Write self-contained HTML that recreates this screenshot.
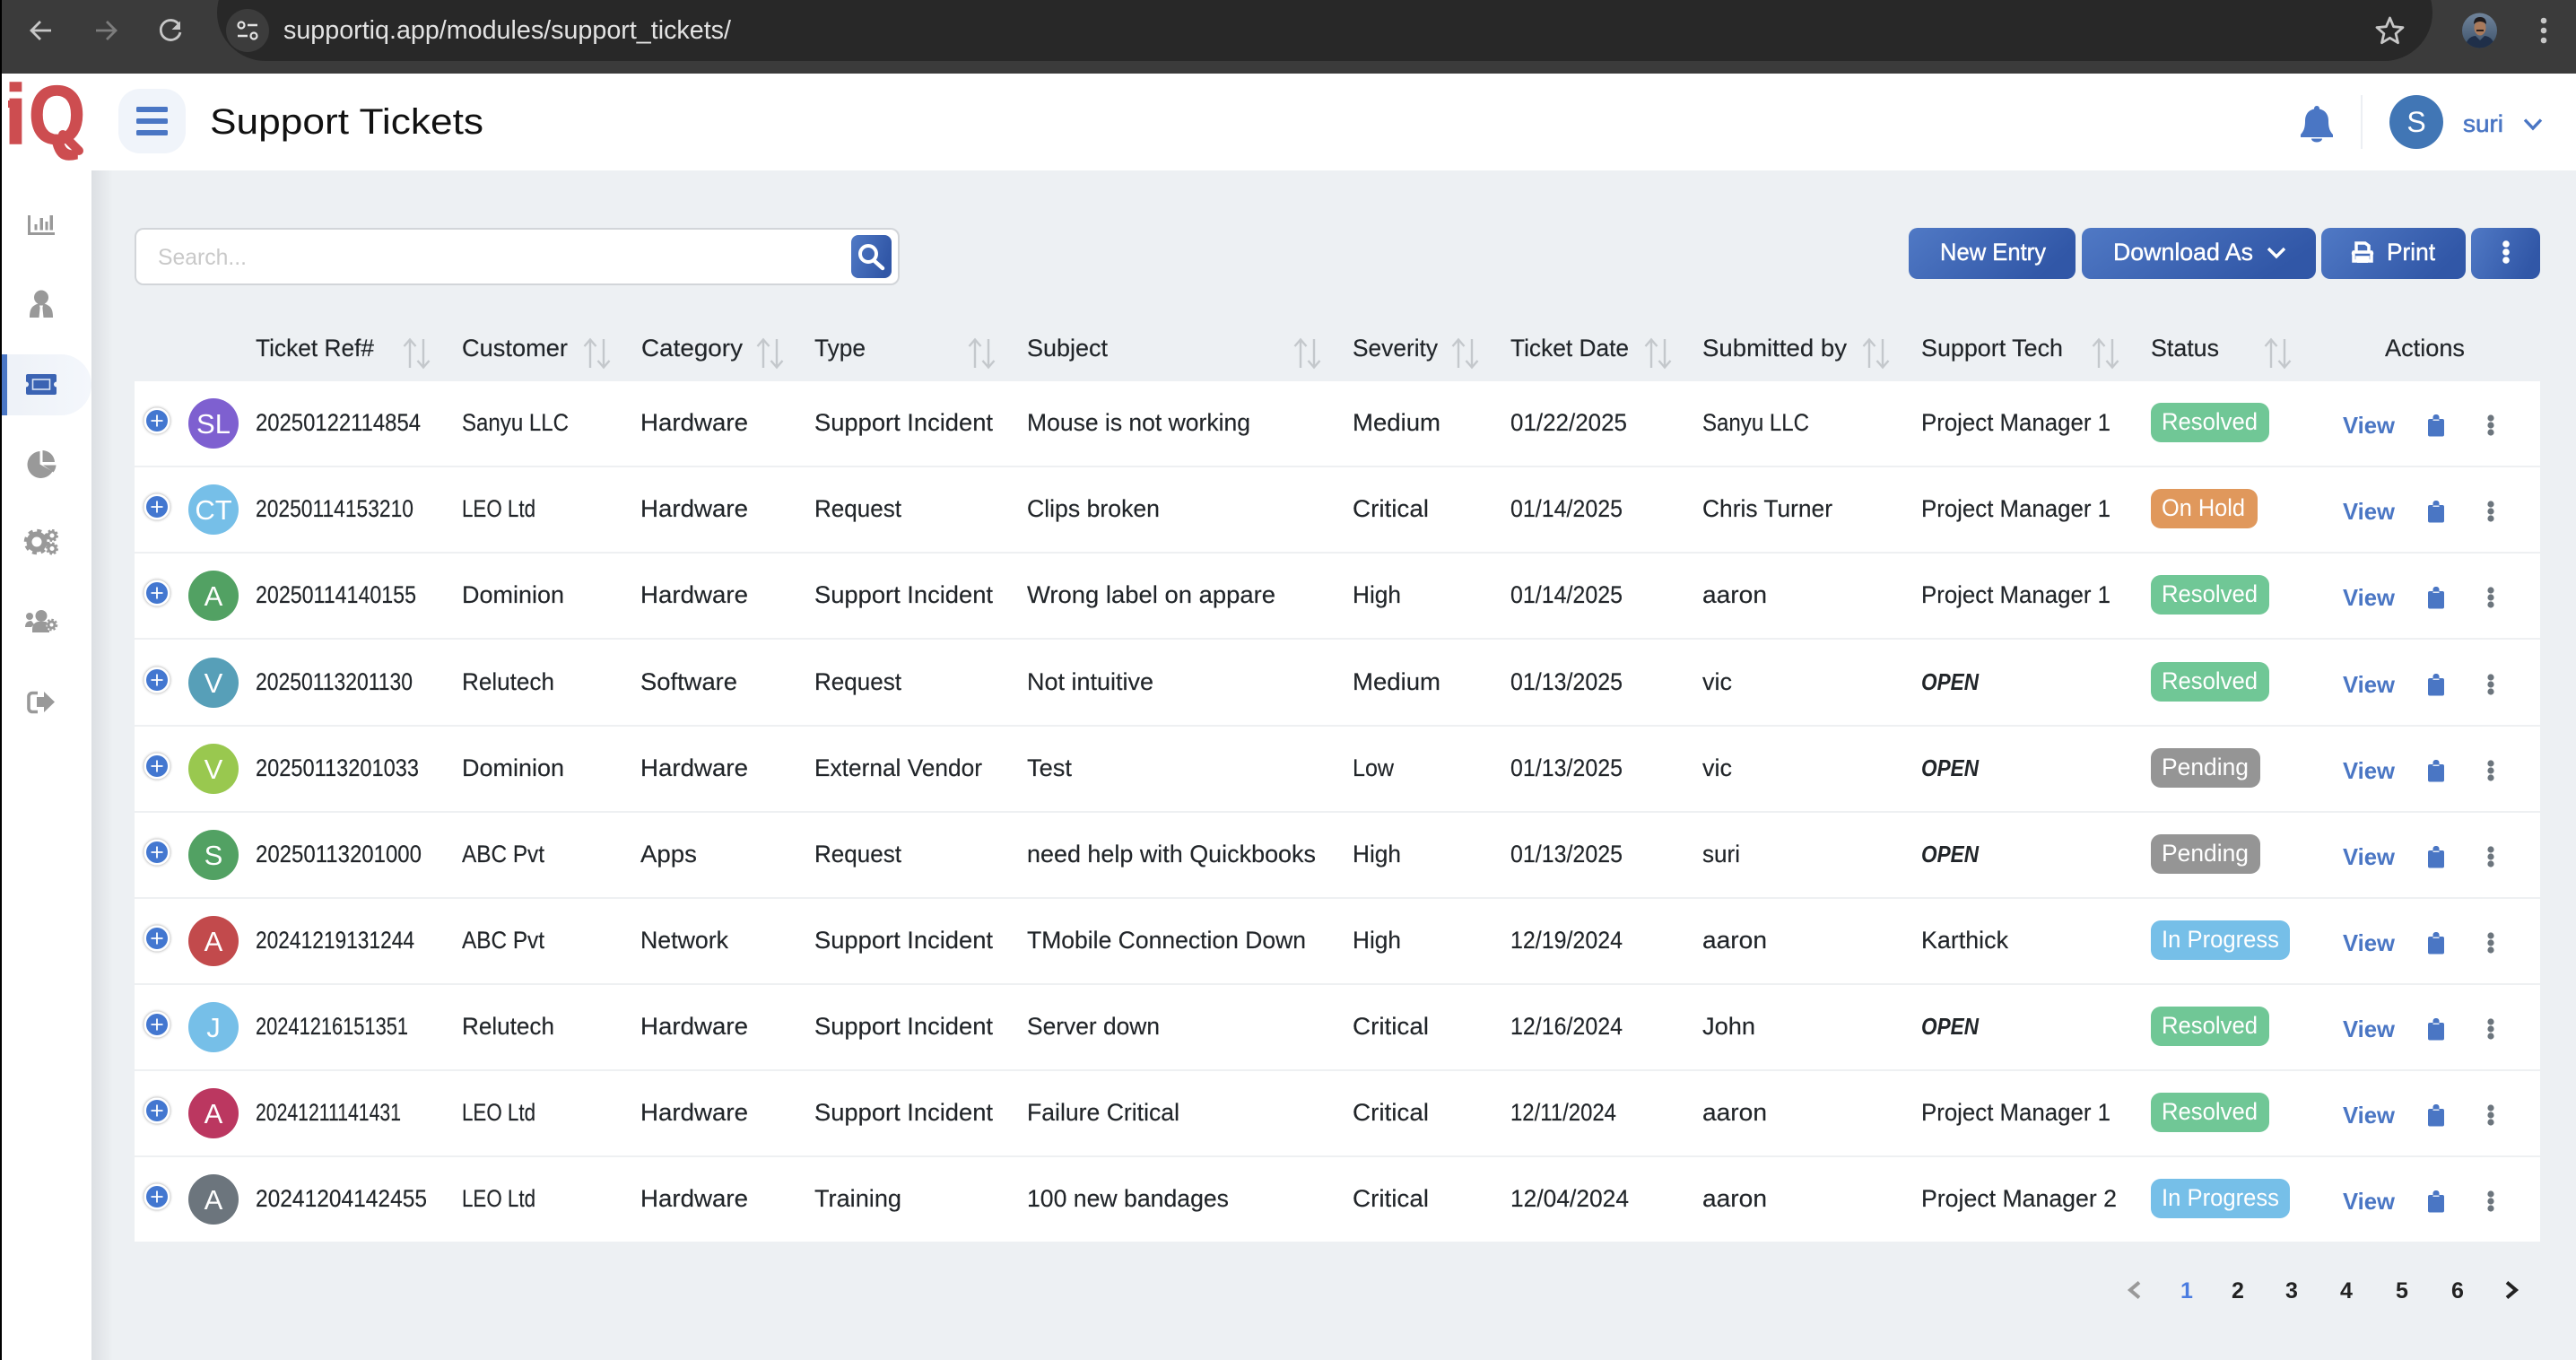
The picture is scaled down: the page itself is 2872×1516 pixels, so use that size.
<!DOCTYPE html>
<html lang="en"><head><meta charset="utf-8"><title>Support Tickets</title>
<style>
html,body{margin:0;padding:0;background:#edf0f3;width:2872px;height:1516px;overflow:hidden}
svg{display:block}
text{font-family:"Liberation Sans",sans-serif;font-size:26.5px;fill:#212529;stroke:#212529;stroke-width:.15}
.w{fill:#fff;stroke:none}
.b{fill:url(#btn)}
.o{font-weight:bold;font-style:italic;stroke:none;font-size:26px}
.v{font-weight:bold;fill:#4a76c4;font-size:26px;stroke:none}
.bd{font-size:26.5px;fill:#fff;stroke:none}
.av{font-size:31px;fill:#fff;text-anchor:middle;stroke:none}
.pg{font-size:25px;font-weight:bold;text-anchor:middle;fill:#222;stroke:none}
.ic{fill:#999}
</style></head><body>
<svg xmlns="http://www.w3.org/2000/svg" width="2872" height="1516" viewBox="0 0 2872 1516">
<defs>
<linearGradient id="btn" x1="0" y1="0" x2="1" y2="0.35"><stop offset="0" stop-color="#5079c5"/><stop offset="1" stop-color="#3157a7"/></linearGradient>
<linearGradient id="side" x1="0" x2="1" y1="0" y2="0"><stop offset="0" stop-color="#dcdfe3"/><stop offset="1" stop-color="#edf0f3"/></linearGradient>
<linearGradient id="act" x1="0" x2="1" y1="0" y2="0"><stop offset="0" stop-color="#edf1f7"/><stop offset="1" stop-color="#f4f7fc"/></linearGradient>
<linearGradient id="photo" x1="0" x2="0" y1="0" y2="1"><stop offset="0" stop-color="#71859c"/><stop offset="1" stop-color="#3b5068"/></linearGradient>
<filter id="sh" x="-30%" y="-30%" width="160%" height="160%"><feDropShadow dx="0" dy="0" stdDeviation="1.6" flood-color="#000" flood-opacity=".45"/></filter>
<g id="plus"><circle cx="175" cy="44" r="14.5" fill="#fff" filter="url(#sh)"/><circle cx="175" cy="44" r="12" fill="#4377d0"/><path d="M168.5 44h13M175 37.5v13" stroke="#fff" stroke-width="1.8"/></g>
<g id="clip"><path d="M2707 469a2 2 0 0 1 2-2h3.500v-1.500a3.500 3.500 0 0 1 2.500-3.500h2a3.500 3.500 0 0 1 2.500 3.500v1.500h3.500a2 2 0 0 1 2 2v15.500a2 2 0 0 1-2 2h-14a2 2 0 0 1-2-2z" transform="translate(0,-425)" fill="#4a76c4"/><path d="M2712.500 43.200h7" stroke="#fff" stroke-width="1.300"/></g>
<g id="dots"><circle cx="2777" cy="41" r="3.600" fill="#6c757d"/><circle cx="2777" cy="49" r="3.600" fill="#6c757d"/><circle cx="2777" cy="57" r="3.600" fill="#6c757d"/></g>
<g id="sort" fill="none" stroke="#c4c8cc" stroke-width="2.400"><path d="M0 1v32M-6.500 9 0 1.500 6.500 9"/><path d="M15 1v32M8.500 25 15 32.500 21.500 25"/></g>
</defs>

<!-- page -->
<rect width="2872" height="1516" fill="#edf0f3"/>
<rect x="102" y="190" width="24" height="1326" fill="url(#side)"/>
<rect x="0" y="82" width="2872" height="108" fill="#fff"/>
<rect x="2" y="190" width="100" height="1326" fill="#fff"/>

<!-- browser bar -->
<rect width="2872" height="82" fill="#3b3b3b"/>
<rect x="242" y="-40" width="2470" height="108" rx="54" fill="#282828"/>
<path d="M57 34H36M45 24 35 34 45 44" fill="none" stroke="#c7c7c7" stroke-width="2.800"/>
<path d="M107 34H128M119 24 129 34 119 44" fill="none" stroke="#7c7c7c" stroke-width="2.800"/>
<path d="M199.500 27.500A11 11 0 1 0 201 36" fill="none" stroke="#c7c7c7" stroke-width="2.800"/><path d="M201 23.500v9.500h-9.500z" fill="#c7c7c7"/>
<circle cx="276" cy="34" r="24" fill="#3c3c3c"/>
<circle cx="269" cy="28" r="3.500" fill="none" stroke="#e3e3e3" stroke-width="2.200"/><path d="M276 28h11M265 40h11" stroke="#e3e3e3" stroke-width="2.400"/><circle cx="283" cy="40" r="3.500" fill="none" stroke="#e3e3e3" stroke-width="2.200"/>
<text x="316" y="43" textLength="499" lengthAdjust="spacingAndGlyphs" style="font-size:29px;fill:#e3e3e3;stroke:none">supportiq.app/modules/support_tickets/</text>
<path d="M2664.500 20l4.100 9.700 10.400 .9-7.900 6.900 2.400 10.200-9-5.400-9 5.400 2.400-10.200-7.900-6.900 10.400-.9z" fill="none" stroke="#c7c7c7" stroke-width="2.800" stroke-linejoin="round"/>
<clipPath id="pc"><circle cx="2764.500" cy="34" r="19.500"/></clipPath>
<g clip-path="url(#pc)"><rect x="2744" y="14" width="41" height="41" fill="url(#photo)"/><ellipse cx="2765" cy="31" rx="6.500" ry="8.500" fill="#a97a5c"/><path d="M2758 27q0-8 7-8t7 8q-3-3-7-3t-7 3z" fill="#1d1a1c"/><path d="M2761 33h8v2h-8z" fill="#2a1f1c"/><path d="M2748 56q1-15 12-16l5 5 5-5q11 1 12 16z" fill="#1f2f49"/></g>
<circle cx="2836" cy="23" r="3.300" fill="#c7c7c7"/><circle cx="2836" cy="34" r="3.300" fill="#c7c7c7"/><circle cx="2836" cy="45" r="3.300" fill="#c7c7c7"/>
<rect x="0" y="0" width="2" height="1516" fill="#000"/>

<!-- header -->
<text x="5" y="160" textLength="25" lengthAdjust="spacingAndGlyphs" style="font-size:94px;font-weight:bold;fill:#cd4d50;stroke:#cd4d50;stroke-width:1.500">i</text>
<rect x="9" y="112" width="12" height="8" fill="#cd4d50"/>
<text x="32" y="160" textLength="63" lengthAdjust="spacingAndGlyphs" style="font-size:92px;font-weight:bold;fill:#cd4d50;stroke:#cd4d50;stroke-width:1.500">Q</text>
<path d="M70 150 88 168" stroke="#cd4d50" stroke-width="10" stroke-linecap="round"/>
<rect x="132" y="99" width="75" height="72" rx="24" fill="#f0f4fa"/>
<rect x="152" y="119" width="35" height="6" rx="1.500" fill="#4a76c4"/><rect x="152" y="132" width="35" height="6" rx="1.500" fill="#4a76c4"/><rect x="152" y="145" width="35" height="6" rx="1.500" fill="#4a76c4"/>
<text x="234" y="149" textLength="305" lengthAdjust="spacingAndGlyphs" style="font-size:40px;fill:#111;stroke:none">Support Tickets</text>
<path d="M2583 118c2 0 3 1.500 3 3.500 7 1.500 10 7 10 13 0 9 2 12 5 15.500v3h-36v-3c3-3.500 5-6.500 5-15.500 0-6 3-11.500 10-13 0-2 1-3.500 3-3.500z" fill="#4a76c4"/><path d="M2577 154.500h12a6 4 0 0 1-12 0z" fill="#4a76c4"/>
<rect x="2632" y="106" width="2" height="60" fill="#eceff3"/>
<circle cx="2694" cy="136" r="30" fill="#4176b5"/>
<text x="2694" y="147" text-anchor="middle" style="font-size:32px;fill:#fff;stroke:none">S</text>
<text x="2746" y="147" textLength="45" lengthAdjust="spacingAndGlyphs" style="font-size:27px;fill:#4a76c4;stroke:#4a76c4;stroke-width:.6">suri</text>
<path d="M2815 133.500 2824 143 2833 133.500" fill="none" stroke="#4a76c4" stroke-width="3.400"/>

<!-- sidebar -->
<path d="M2 395H68a34 34 0 0 1 34 34a34 34 0 0 1-34 34H2z" fill="url(#act)"/>
<rect x="2" y="395" width="6" height="68" fill="#4a76c4"/>
<path d="M32.500 240v20.500H61" fill="none" stroke="#999" stroke-width="3"/><rect x="38.500" y="250" width="3" height="6.500" class="ic"/><rect x="44.500" y="243" width="3.500" height="13.500" class="ic"/><rect x="50.500" y="247" width="3" height="9.500" class="ic"/><rect x="55.500" y="240" width="3.500" height="16.500" class="ic"/>
<circle cx="46" cy="331.500" r="8" class="ic"/><path d="M33 354c0-9 2-13 9.500-15.500h7C57 341 59 345 59 354z" class="ic"/><path d="M44 340.500h4l-.6 2.500 1.100 11h-5l1.100-11z" fill="#fff"/>
<path d="M44.500 503a15 15 0 1 0 14 22.500l-14-8z" class="ic"/><path d="M47.500 502a14 14 0 0 1 13.500 13h-13.500z" class="ic"/><path d="M48 518.500h14.500a14 14 0 0 1-3 8z" class="ic"/>
<circle cx="41" cy="604" r="8.500" fill="none" stroke="#999" stroke-width="6"/><circle cx="41" cy="604" r="12.500" fill="none" stroke="#999" stroke-width="3.500" stroke-dasharray="5 4.800"/>
<circle cx="58" cy="597" r="4" fill="none" stroke="#999" stroke-width="3"/><circle cx="58" cy="597" r="6" fill="none" stroke="#999" stroke-width="2" stroke-dasharray="2.500 2.200"/>
<circle cx="58" cy="611.500" r="4" fill="none" stroke="#999" stroke-width="3"/><circle cx="58" cy="611.500" r="6" fill="none" stroke="#999" stroke-width="2" stroke-dasharray="2.500 2.200"/>
<circle cx="33" cy="687" r="4" class="ic"/><path d="M28 699c0-5 3-7 7-7l3 4-3 3z" class="ic"/><circle cx="46" cy="686.500" r="6.500" class="ic"/><path d="M36 705v-4c0-5 4-8 7-8h6c3 0 5 1 6 2v10z" class="ic"/>
<circle cx="58" cy="697" r="6.500" fill="#fff"/><circle cx="57.500" cy="696.500" r="3.500" fill="none" stroke="#999" stroke-width="3"/><circle cx="57.500" cy="696.500" r="5.800" fill="none" stroke="#999" stroke-width="2" stroke-dasharray="2.500 2"/>
<path d="M42 772.500h-6a4 4 0 0 0-4 4v13a4 4 0 0 0 4 4h6" fill="none" stroke="#999" stroke-width="3.600"/><path d="M41 777h8v-6l12 11.500-12 11.500v-6h-8z" class="ic"/>
<path d="M31 417h30a2 2 0 0 1 2 2v6.500a3 3 0 0 0 0 6V438a2 2 0 0 1-2 2H31a2 2 0 0 1-2-2v-6.500a3 3 0 0 0 0-6V419a2 2 0 0 1 2-2z" fill="#3b63b3"/>
<rect x="36.500" y="423" width="19" height="11" fill="#3b63b3" stroke="#dbe4f4" stroke-width="1.600"/>

<!-- search -->
<rect x="151" y="255" width="851" height="62" rx="9" fill="#fff" stroke="#d2d5d9" stroke-width="2"/>
<text x="176" y="295" textLength="99" lengthAdjust="spacingAndGlyphs" style="font-size:25px;fill:#c9c9c9;stroke:none">Search...</text>
<rect x="949" y="262" width="45" height="48" rx="8" fill="url(#btn)"/>
<circle cx="968" cy="283" r="9" fill="none" stroke="#fff" stroke-width="4"/><path d="M975 291 984 299" stroke="#fff" stroke-width="4.500" stroke-linecap="round"/>

<!-- buttons -->
<rect x="2128" y="254" width="186" height="57" rx="10" class="b"/>
<text x="2163" y="290" textLength="118" lengthAdjust="spacingAndGlyphs" style="font-size:26.5px;fill:#fff;stroke:#fff;stroke-width:.4">New Entry</text>
<rect x="2321" y="254" width="261" height="57" rx="10" class="b"/>
<text x="2356" y="290" textLength="156" lengthAdjust="spacingAndGlyphs" style="font-size:26.5px;fill:#fff;stroke:#fff;stroke-width:.4">Download As</text>
<path d="M2529 277 2538 286 2547 277" fill="none" stroke="#fff" stroke-width="3.400"/>
<rect x="2588" y="254" width="161" height="57" rx="10" class="b"/>
<path d="M2627 281v-10h10l4 3v7M2624 291v-7a3 3 0 0 1 0-3h20a3 3 0 0 1 0 3v7h-4v-4h-12v4z" fill="none" stroke="#fff" stroke-width="3.500"/><rect x="2628" y="288" width="12" height="5" fill="#fff"/>
<text x="2661" y="290" textLength="54" lengthAdjust="spacingAndGlyphs" style="font-size:26.5px;fill:#fff;stroke:#fff;stroke-width:.4">Print</text>
<rect x="2755" y="254" width="77" height="57" rx="10" class="b"/>
<circle cx="2794" cy="272" r="3.800" fill="#fff"/><circle cx="2794" cy="281" r="3.800" fill="#fff"/><circle cx="2794" cy="290" r="3.800" fill="#fff"/>

<!-- table head -->
<text x="285" y="397" textLength="132" lengthAdjust="spacingAndGlyphs">Ticket Ref#</text><use href="#sort" x="457" y="377"/>
<text x="515" y="397" textLength="118" lengthAdjust="spacingAndGlyphs">Customer</text><use href="#sort" x="658" y="377"/>
<text x="715" y="397" textLength="113" lengthAdjust="spacingAndGlyphs">Category</text><use href="#sort" x="851" y="377"/>
<text x="908" y="397" textLength="57" lengthAdjust="spacingAndGlyphs">Type</text><use href="#sort" x="1087" y="377"/>
<text x="1145" y="397" textLength="90" lengthAdjust="spacingAndGlyphs">Subject</text><use href="#sort" x="1450" y="377"/>
<text x="1508" y="397" textLength="95" lengthAdjust="spacingAndGlyphs">Severity</text><use href="#sort" x="1626" y="377"/>
<text x="1684" y="397" textLength="132" lengthAdjust="spacingAndGlyphs">Ticket Date</text><use href="#sort" x="1841" y="377"/>
<text x="1898" y="397" textLength="161" lengthAdjust="spacingAndGlyphs">Submitted by</text><use href="#sort" x="2084" y="377"/>
<text x="2142" y="397" textLength="158" lengthAdjust="spacingAndGlyphs">Support Tech</text><use href="#sort" x="2340" y="377"/>
<text x="2398" y="397" textLength="76" lengthAdjust="spacingAndGlyphs">Status</text><use href="#sort" x="2532" y="377"/>
<text x="2659" y="397" textLength="89" lengthAdjust="spacingAndGlyphs">Actions</text>

<!-- table body -->
<rect x="150" y="425" width="2682" height="959" fill="#fff"/>
<g fill="#eef0f2"><rect x="150" y="519" width="2682" height="2"/><rect x="150" y="615" width="2682" height="2"/><rect x="150" y="711" width="2682" height="2"/><rect x="150" y="808" width="2682" height="2"/><rect x="150" y="904" width="2682" height="2"/><rect x="150" y="1000" width="2682" height="2"/><rect x="150" y="1096" width="2682" height="2"/><rect x="150" y="1192" width="2682" height="2"/><rect x="150" y="1288" width="2682" height="2"/></g>

<g transform="translate(0,425)">
<use href="#plus"/><circle cx="238" cy="47" r="28" fill="#7e60d0"/><text x="238" y="58" class="av">SL</text>
<text x="285" y="55" textLength="184" lengthAdjust="spacingAndGlyphs">20250122114854</text>
<text x="515" y="55" textLength="119" lengthAdjust="spacingAndGlyphs">Sanyu LLC</text>
<text x="714" y="55" textLength="120" lengthAdjust="spacingAndGlyphs">Hardware</text>
<text x="908" y="55" textLength="199" lengthAdjust="spacingAndGlyphs">Support Incident</text>
<text x="1145" y="55" textLength="249" lengthAdjust="spacingAndGlyphs">Mouse is not working</text>
<text x="1508" y="55" textLength="98" lengthAdjust="spacingAndGlyphs">Medium</text>
<text x="1684" y="55" textLength="130" lengthAdjust="spacingAndGlyphs">01/22/2025</text>
<text x="1898" y="55" textLength="119" lengthAdjust="spacingAndGlyphs">Sanyu LLC</text>
<text x="2142" y="55" textLength="211" lengthAdjust="spacingAndGlyphs">Project Manager 1</text>
<rect x="2398" y="24" width="132" height="44" rx="11" fill="#70c796"/><text x="2410" y="54" textLength="107" lengthAdjust="spacingAndGlyphs" class="bd">Resolved</text>
<text x="2612" y="58" textLength="58" lengthAdjust="spacingAndGlyphs" class="v">View</text><use href="#clip"/><use href="#dots"/>
</g>

<g transform="translate(0,521)">
<use href="#plus"/><circle cx="238" cy="47" r="28" fill="#76bfe8"/><text x="238" y="58" class="av">CT</text>
<text x="285" y="55" textLength="176" lengthAdjust="spacingAndGlyphs">20250114153210</text>
<text x="515" y="55" textLength="82" lengthAdjust="spacingAndGlyphs">LEO Ltd</text>
<text x="714" y="55" textLength="120" lengthAdjust="spacingAndGlyphs">Hardware</text>
<text x="908" y="55" textLength="97" lengthAdjust="spacingAndGlyphs">Request</text>
<text x="1145" y="55" textLength="148" lengthAdjust="spacingAndGlyphs">Clips broken</text>
<text x="1508" y="55" textLength="85" lengthAdjust="spacingAndGlyphs">Critical</text>
<text x="1684" y="55" textLength="125" lengthAdjust="spacingAndGlyphs">01/14/2025</text>
<text x="1898" y="55" textLength="145" lengthAdjust="spacingAndGlyphs">Chris Turner</text>
<text x="2142" y="55" textLength="211" lengthAdjust="spacingAndGlyphs">Project Manager 1</text>
<rect x="2398" y="24" width="119" height="44" rx="11" fill="#e0985c"/><text x="2410" y="54" textLength="93" lengthAdjust="spacingAndGlyphs" class="bd">On Hold</text>
<text x="2612" y="58" textLength="58" lengthAdjust="spacingAndGlyphs" class="v">View</text><use href="#clip"/><use href="#dots"/>
</g>

<g transform="translate(0,617)">
<use href="#plus"/><circle cx="238" cy="47" r="28" fill="#52a163"/><text x="238" y="58" class="av">A</text>
<text x="285" y="55" textLength="179" lengthAdjust="spacingAndGlyphs">20250114140155</text>
<text x="515" y="55" textLength="114" lengthAdjust="spacingAndGlyphs">Dominion</text>
<text x="714" y="55" textLength="120" lengthAdjust="spacingAndGlyphs">Hardware</text>
<text x="908" y="55" textLength="199" lengthAdjust="spacingAndGlyphs">Support Incident</text>
<text x="1145" y="55" textLength="277" lengthAdjust="spacingAndGlyphs">Wrong label on appare</text>
<text x="1508" y="55" textLength="54" lengthAdjust="spacingAndGlyphs">High</text>
<text x="1684" y="55" textLength="125" lengthAdjust="spacingAndGlyphs">01/14/2025</text>
<text x="1898" y="55" textLength="72" lengthAdjust="spacingAndGlyphs">aaron</text>
<text x="2142" y="55" textLength="211" lengthAdjust="spacingAndGlyphs">Project Manager 1</text>
<rect x="2398" y="24" width="132" height="44" rx="11" fill="#70c796"/><text x="2410" y="54" textLength="107" lengthAdjust="spacingAndGlyphs" class="bd">Resolved</text>
<text x="2612" y="58" textLength="58" lengthAdjust="spacingAndGlyphs" class="v">View</text><use href="#clip"/><use href="#dots"/>
</g>

<g transform="translate(0,714)">
<use href="#plus"/><circle cx="238" cy="47" r="28" fill="#579fb8"/><text x="238" y="58" class="av">V</text>
<text x="285" y="55" textLength="175" lengthAdjust="spacingAndGlyphs">20250113201130</text>
<text x="515" y="55" textLength="103" lengthAdjust="spacingAndGlyphs">Relutech</text>
<text x="714" y="55" textLength="108" lengthAdjust="spacingAndGlyphs">Software</text>
<text x="908" y="55" textLength="97" lengthAdjust="spacingAndGlyphs">Request</text>
<text x="1145" y="55" textLength="141" lengthAdjust="spacingAndGlyphs">Not intuitive</text>
<text x="1508" y="55" textLength="98" lengthAdjust="spacingAndGlyphs">Medium</text>
<text x="1684" y="55" textLength="125" lengthAdjust="spacingAndGlyphs">01/13/2025</text>
<text x="1898" y="55" textLength="33" lengthAdjust="spacingAndGlyphs">vic</text>
<text x="2142" y="55" textLength="64" lengthAdjust="spacingAndGlyphs" class="o">OPEN</text>
<rect x="2398" y="24" width="132" height="44" rx="11" fill="#70c796"/><text x="2410" y="54" textLength="107" lengthAdjust="spacingAndGlyphs" class="bd">Resolved</text>
<text x="2612" y="58" textLength="58" lengthAdjust="spacingAndGlyphs" class="v">View</text><use href="#clip"/><use href="#dots"/>
</g>

<g transform="translate(0,810)">
<use href="#plus"/><circle cx="238" cy="47" r="28" fill="#99c84f"/><text x="238" y="58" class="av">V</text>
<text x="285" y="55" textLength="182" lengthAdjust="spacingAndGlyphs">20250113201033</text>
<text x="515" y="55" textLength="114" lengthAdjust="spacingAndGlyphs">Dominion</text>
<text x="714" y="55" textLength="120" lengthAdjust="spacingAndGlyphs">Hardware</text>
<text x="908" y="55" textLength="187" lengthAdjust="spacingAndGlyphs">External Vendor</text>
<text x="1145" y="55" textLength="50" lengthAdjust="spacingAndGlyphs">Test</text>
<text x="1508" y="55" textLength="46" lengthAdjust="spacingAndGlyphs">Low</text>
<text x="1684" y="55" textLength="125" lengthAdjust="spacingAndGlyphs">01/13/2025</text>
<text x="1898" y="55" textLength="33" lengthAdjust="spacingAndGlyphs">vic</text>
<text x="2142" y="55" textLength="64" lengthAdjust="spacingAndGlyphs" class="o">OPEN</text>
<rect x="2398" y="24" width="122" height="44" rx="11" fill="#959595"/><text x="2410" y="54" textLength="97" lengthAdjust="spacingAndGlyphs" class="bd">Pending</text>
<text x="2612" y="58" textLength="58" lengthAdjust="spacingAndGlyphs" class="v">View</text><use href="#clip"/><use href="#dots"/>
</g>

<g transform="translate(0,906)">
<use href="#plus"/><circle cx="238" cy="47" r="28" fill="#52a163"/><text x="238" y="58" class="av">S</text>
<text x="285" y="55" textLength="185" lengthAdjust="spacingAndGlyphs">20250113201000</text>
<text x="515" y="55" textLength="92" lengthAdjust="spacingAndGlyphs">ABC Pvt</text>
<text x="714" y="55" textLength="63" lengthAdjust="spacingAndGlyphs">Apps</text>
<text x="908" y="55" textLength="97" lengthAdjust="spacingAndGlyphs">Request</text>
<text x="1145" y="55" textLength="322" lengthAdjust="spacingAndGlyphs">need help with Quickbooks</text>
<text x="1508" y="55" textLength="54" lengthAdjust="spacingAndGlyphs">High</text>
<text x="1684" y="55" textLength="125" lengthAdjust="spacingAndGlyphs">01/13/2025</text>
<text x="1898" y="55" textLength="42" lengthAdjust="spacingAndGlyphs">suri</text>
<text x="2142" y="55" textLength="64" lengthAdjust="spacingAndGlyphs" class="o">OPEN</text>
<rect x="2398" y="24" width="122" height="44" rx="11" fill="#959595"/><text x="2410" y="54" textLength="97" lengthAdjust="spacingAndGlyphs" class="bd">Pending</text>
<text x="2612" y="58" textLength="58" lengthAdjust="spacingAndGlyphs" class="v">View</text><use href="#clip"/><use href="#dots"/>
</g>

<g transform="translate(0,1002)">
<use href="#plus"/><circle cx="238" cy="47" r="28" fill="#c24a4c"/><text x="238" y="58" class="av">A</text>
<text x="285" y="55" textLength="177" lengthAdjust="spacingAndGlyphs">20241219131244</text>
<text x="515" y="55" textLength="92" lengthAdjust="spacingAndGlyphs">ABC Pvt</text>
<text x="714" y="55" textLength="98" lengthAdjust="spacingAndGlyphs">Network</text>
<text x="908" y="55" textLength="199" lengthAdjust="spacingAndGlyphs">Support Incident</text>
<text x="1145" y="55" textLength="311" lengthAdjust="spacingAndGlyphs">TMobile Connection Down</text>
<text x="1508" y="55" textLength="54" lengthAdjust="spacingAndGlyphs">High</text>
<text x="1684" y="55" textLength="125" lengthAdjust="spacingAndGlyphs">12/19/2024</text>
<text x="1898" y="55" textLength="72" lengthAdjust="spacingAndGlyphs">aaron</text>
<text x="2142" y="55" textLength="97" lengthAdjust="spacingAndGlyphs">Karthick</text>
<rect x="2398" y="24" width="155" height="44" rx="11" fill="#76bfe8"/><text x="2410" y="54" textLength="131" lengthAdjust="spacingAndGlyphs" class="bd">In Progress</text>
<text x="2612" y="58" textLength="58" lengthAdjust="spacingAndGlyphs" class="v">View</text><use href="#clip"/><use href="#dots"/>
</g>

<g transform="translate(0,1098)">
<use href="#plus"/><circle cx="238" cy="47" r="28" fill="#76bfe8"/><text x="238" y="58" class="av">J</text>
<text x="285" y="55" textLength="170" lengthAdjust="spacingAndGlyphs">20241216151351</text>
<text x="515" y="55" textLength="103" lengthAdjust="spacingAndGlyphs">Relutech</text>
<text x="714" y="55" textLength="120" lengthAdjust="spacingAndGlyphs">Hardware</text>
<text x="908" y="55" textLength="199" lengthAdjust="spacingAndGlyphs">Support Incident</text>
<text x="1145" y="55" textLength="148" lengthAdjust="spacingAndGlyphs">Server down</text>
<text x="1508" y="55" textLength="85" lengthAdjust="spacingAndGlyphs">Critical</text>
<text x="1684" y="55" textLength="125" lengthAdjust="spacingAndGlyphs">12/16/2024</text>
<text x="1898" y="55" textLength="59" lengthAdjust="spacingAndGlyphs">John</text>
<text x="2142" y="55" textLength="64" lengthAdjust="spacingAndGlyphs" class="o">OPEN</text>
<rect x="2398" y="24" width="132" height="44" rx="11" fill="#70c796"/><text x="2410" y="54" textLength="107" lengthAdjust="spacingAndGlyphs" class="bd">Resolved</text>
<text x="2612" y="58" textLength="58" lengthAdjust="spacingAndGlyphs" class="v">View</text><use href="#clip"/><use href="#dots"/>
</g>

<g transform="translate(0,1194)">
<use href="#plus"/><circle cx="238" cy="47" r="28" fill="#bb3760"/><text x="238" y="58" class="av">A</text>
<text x="285" y="55" textLength="162" lengthAdjust="spacingAndGlyphs">20241211141431</text>
<text x="515" y="55" textLength="82" lengthAdjust="spacingAndGlyphs">LEO Ltd</text>
<text x="714" y="55" textLength="120" lengthAdjust="spacingAndGlyphs">Hardware</text>
<text x="908" y="55" textLength="199" lengthAdjust="spacingAndGlyphs">Support Incident</text>
<text x="1145" y="55" textLength="170" lengthAdjust="spacingAndGlyphs">Failure Critical</text>
<text x="1508" y="55" textLength="85" lengthAdjust="spacingAndGlyphs">Critical</text>
<text x="1684" y="55" textLength="118" lengthAdjust="spacingAndGlyphs">12/11/2024</text>
<text x="1898" y="55" textLength="72" lengthAdjust="spacingAndGlyphs">aaron</text>
<text x="2142" y="55" textLength="211" lengthAdjust="spacingAndGlyphs">Project Manager 1</text>
<rect x="2398" y="24" width="132" height="44" rx="11" fill="#70c796"/><text x="2410" y="54" textLength="107" lengthAdjust="spacingAndGlyphs" class="bd">Resolved</text>
<text x="2612" y="58" textLength="58" lengthAdjust="spacingAndGlyphs" class="v">View</text><use href="#clip"/><use href="#dots"/>
</g>

<g transform="translate(0,1290)">
<use href="#plus"/><circle cx="238" cy="47" r="28" fill="#6c757d"/><text x="238" y="58" class="av">A</text>
<text x="285" y="55" textLength="191" lengthAdjust="spacingAndGlyphs">20241204142455</text>
<text x="515" y="55" textLength="82" lengthAdjust="spacingAndGlyphs">LEO Ltd</text>
<text x="714" y="55" textLength="120" lengthAdjust="spacingAndGlyphs">Hardware</text>
<text x="908" y="55" textLength="97" lengthAdjust="spacingAndGlyphs">Training</text>
<text x="1145" y="55" textLength="225" lengthAdjust="spacingAndGlyphs">100 new bandages</text>
<text x="1508" y="55" textLength="85" lengthAdjust="spacingAndGlyphs">Critical</text>
<text x="1684" y="55" textLength="132" lengthAdjust="spacingAndGlyphs">12/04/2024</text>
<text x="1898" y="55" textLength="72" lengthAdjust="spacingAndGlyphs">aaron</text>
<text x="2142" y="55" textLength="218" lengthAdjust="spacingAndGlyphs">Project Manager 2</text>
<rect x="2398" y="24" width="155" height="44" rx="11" fill="#76bfe8"/><text x="2410" y="54" textLength="131" lengthAdjust="spacingAndGlyphs" class="bd">In Progress</text>
<text x="2612" y="58" textLength="58" lengthAdjust="spacingAndGlyphs" class="v">View</text><use href="#clip"/><use href="#dots"/>
</g>

<!-- pagination -->
<path d="M2385 1429.500 2375 1438 2385 1446.500" fill="none" stroke="#999" stroke-width="4"/>
<text x="2438" y="1447" class="pg" style="fill:#4a7ce0">1</text>
<text x="2495" y="1447" class="pg">2</text>
<text x="2555" y="1447" class="pg">3</text>
<text x="2616" y="1447" class="pg">4</text>
<text x="2678" y="1447" class="pg">5</text>
<text x="2740" y="1447" class="pg">6</text>
<path d="M2795 1429.500 2805 1438 2795 1446.500" fill="none" stroke="#222" stroke-width="4"/>
</svg>
</body></html>
